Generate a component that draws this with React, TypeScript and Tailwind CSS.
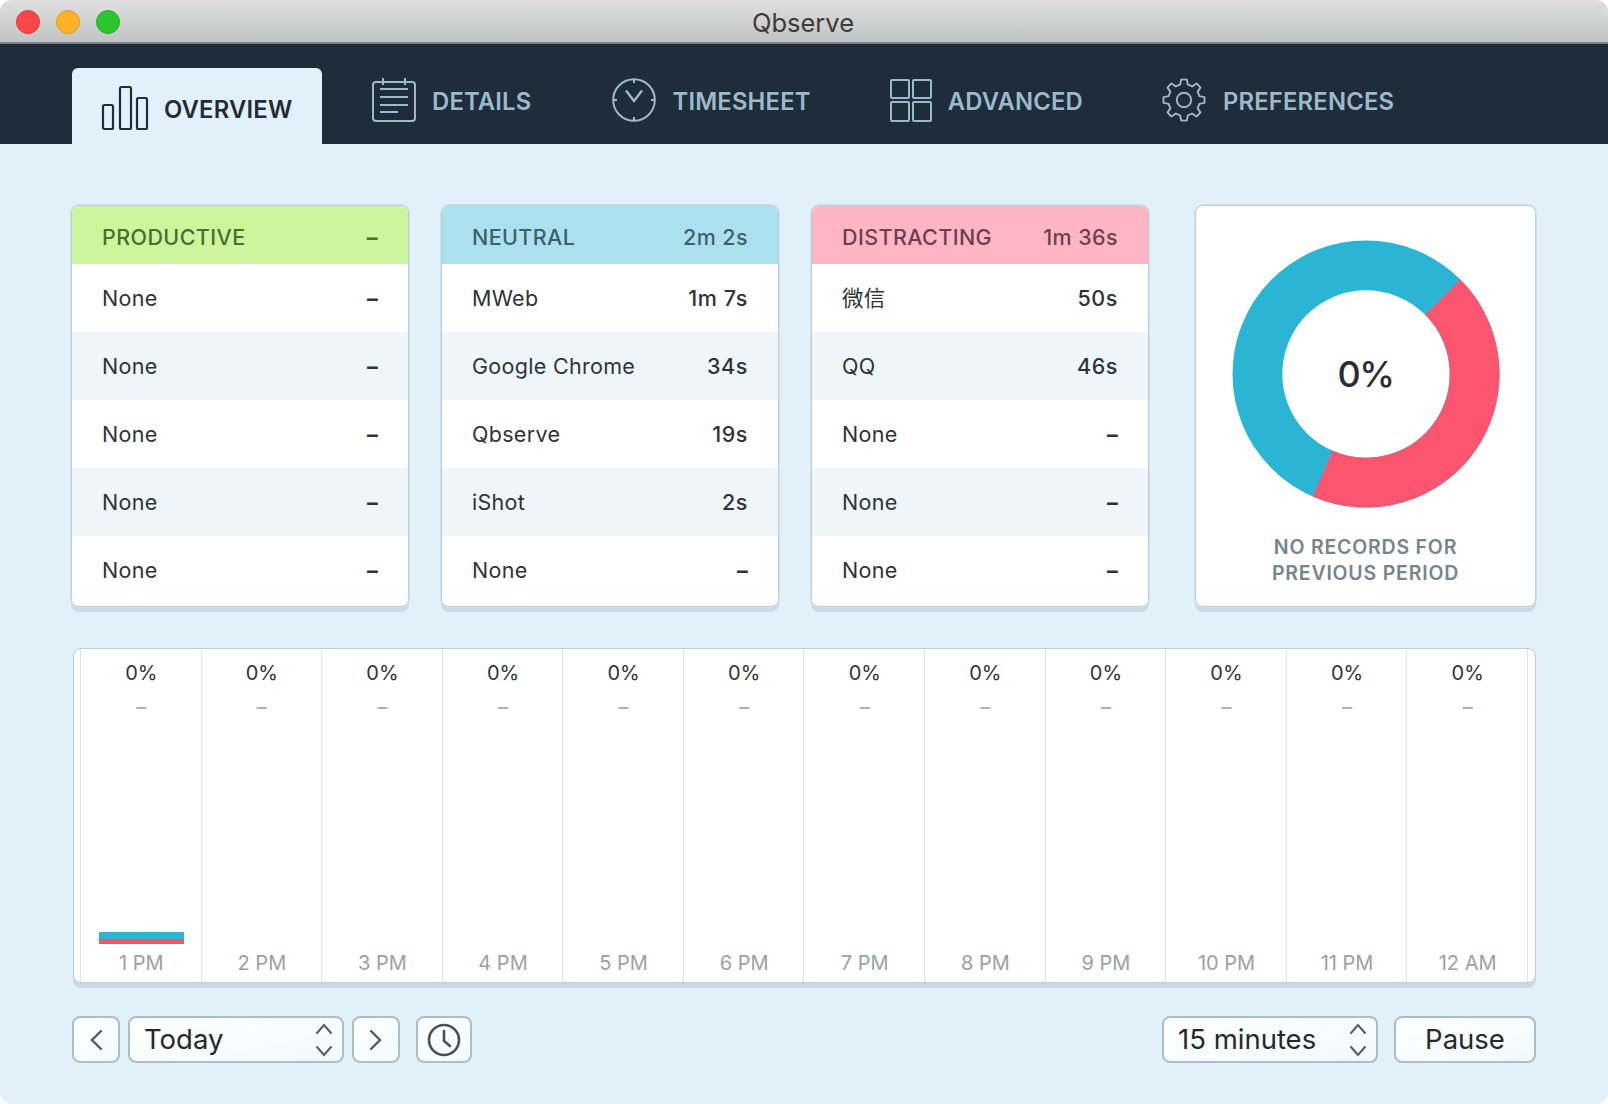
import React from "react";

const gearPath = (() => {
  const pts: string[] = [];
  const p = (deg: number, r: number) => {
    const a = (deg * Math.PI) / 180;
    return `${(24 + Math.sin(a) * r).toFixed(2)} ${(24 - Math.cos(a) * r).toFixed(2)}`;
  };
  for (let i = 0; i < 8; i++) {
    const a = i * 45;
    pts.push(`${i === 0 ? "M" : "L"}${p(a - 14, 16.5)}`);
    pts.push(`L${p(a - 8, 21.5)}`);
    pts.push(`A21.5 21.5 0 0 1 ${p(a + 8, 21.5)}`);
    pts.push(`L${p(a + 14, 16.5)}`);
    pts.push(`A16.5 16.5 0 0 1 ${p(a + 31, 16.5)}`);
  }
  return pts.join(" ") + " Z";
})();

const Stroke = "#9bbaca";

function OverviewIcon() {
  return (
    <svg width="48" height="46" viewBox="0 0 48 46" fill="none" stroke="#1f2c3a" strokeWidth="2.2">
      <rect x="2" y="20" width="10" height="24" rx="1.5" />
      <rect x="19" y="2" width="11" height="42" rx="1.5" />
      <rect x="36" y="13" width="10" height="31" rx="1.5" />
    </svg>
  );
}
function DetailsIcon() {
  return (
    <svg width="44" height="44" viewBox="0 0 44 44" fill="none" stroke={Stroke} strokeWidth="2">
      <rect x="1" y="4" width="42" height="39" rx="3" />
      <path d="M11 0v7M33 0v7M8 11h28M8 19h28M8 27h28M8 34h18" />
    </svg>
  );
}
function ClockIcon() {
  return (
    <svg width="44" height="44" viewBox="0 0 44 44" fill="none" stroke={Stroke} strokeWidth="2">
      <circle cx="22" cy="22" r="20.8" />
      <path d="M22 1v4M22 39v4M1 22h4M39 22h4" />
      <path d="M14 12.5 22 23l8-10.5" strokeWidth="2.4" />
    </svg>
  );
}
function GridIcon() {
  return (
    <svg width="42" height="44" viewBox="0 0 42 44" fill="none" stroke={Stroke} strokeWidth="2">
      <rect x="1" y="2" width="18" height="18" rx="1" />
      <rect x="23" y="2" width="18" height="18" rx="1" />
      <rect x="1" y="24" width="18" height="19" rx="1" />
      <rect x="23" y="24" width="18" height="19" rx="1" />
    </svg>
  );
}
function GearIcon() {
  return (
    <svg width="46" height="46" viewBox="0 0 48 48" fill="none" stroke={Stroke} strokeWidth="2" strokeLinejoin="round">
      <path d={gearPath} />
      <circle cx="24" cy="24" r="7.5" />
    </svg>
  );
}

function Updown() {
  return (
    <svg width="18" height="34" viewBox="0 0 18 34" fill="none" stroke="#555c60" strokeWidth="2" strokeLinecap="round">
      <path d="M2 10 9 2l7 8M2 24l7 8 7-8" />
    </svg>
  );
}

type Row = [string, string];
const cards: { title: string; total: string; head: string; color: string; rows: Row[] }[] = [
  {
    title: "PRODUCTIVE",
    total: "–",
    head: "bg-[#cdf59b]",
    color: "text-[#4b6d2f]",
    rows: [["None", "–"], ["None", "–"], ["None", "–"], ["None", "–"], ["None", "–"]],
  },
  {
    title: "NEUTRAL",
    total: "2m 2s",
    head: "bg-[#abe1ef]",
    color: "text-[#3f5f6c]",
    rows: [["MWeb", "1m 7s"], ["Google Chrome", "34s"], ["Qbserve", "19s"], ["iShot", "2s"], ["None", "–"]],
  },
  {
    title: "DISTRACTING",
    total: "1m 36s",
    head: "bg-[#ffb6c4]",
    color: "text-[#6f3f4b]",
    rows: [["微信", "50s"], ["QQ", "46s"], ["None", "–"], ["None", "–"], ["None", "–"]],
  },
];

const hours = ["1 PM", "2 PM", "3 PM", "4 PM", "5 PM", "6 PM", "7 PM", "8 PM", "9 PM", "10 PM", "11 PM", "12 AM"];

const font = "font-['Inter','Noto_Sans_CJK_SC',sans-serif]";

function Card({ c }: { c: (typeof cards)[number] }) {
  return (
    <div className="w-[338px] h-[402px] rounded-[8px] overflow-hidden bg-white border border-[#bccfdc] shadow-[0_0_0_1px_#d3e1eb,0_5px_0_#cbdae5] flex flex-col">
      <div className={`h-[58px] shrink-0 pt-[5px] flex items-center justify-between px-[30px] text-[21.5px] tracking-[0.4px] font-medium ${c.head} ${c.color}`}>
        <span>{c.title}</span>
        <span className={c.total === "–" ? "font-bold" : ""}>{c.total}</span>
      </div>
      {c.rows.map((r, i) => (
        <div
          key={i}
          className="h-[68px] shrink-0 flex items-center justify-between px-[30px] text-[21.5px] tracking-[0.3px] text-[#2f3336] odd:bg-[#eef6fa] even:bg-white"
        >
          <span>{r[0]}</span>
          <span className={r[1] === "–" ? "font-bold" : "font-medium tracking-[0.6px]"}>{r[1]}</span>
        </div>
      ))}
    </div>
  );
}

const btn =
  "h-[47px] rounded-[8px] border-2 border-[#adbcc6] bg-gradient-to-br from-white to-[#f1f9fd] flex items-center text-[#26292b]";

export default function App() {
  return (
    <div className={`w-[1608px] h-[1104px] bg-white ${font}`}>
      <div className="w-full h-full rounded-[12px] overflow-hidden bg-[#e2f1f9] flex flex-col">
        <div className="relative h-[44px] shrink-0 pt-[5px] pr-[2px] bg-gradient-to-b from-[#e0e0e0] to-[#c2c3c3] border-b-2 border-[#7d8489] flex items-center justify-center text-[25.5px] text-[#3b3b3b]">
          <div className="absolute left-[16px] top-[10px] flex gap-[16px]">
            <span className="w-[24px] h-[24px] rounded-full bg-[#fc4646] border border-[#df3a3a]" />
            <span className="w-[24px] h-[24px] rounded-full bg-[#fdb124] border border-[#e19d1c]" />
            <span className="w-[24px] h-[24px] rounded-full bg-[#2ac52f] border border-[#24ad29]" />
          </div>
          Qbserve
        </div>

        <div className="h-[100px] shrink-0 bg-[#1f2c3a] flex items-end pl-[72px] text-[23.8px] font-semibold text-[#9bbaca] tracking-[0.2px]">
          <div className="w-[250px] h-[76px] rounded-t-[6px] bg-[#e2f1f9] flex items-start pt-[17px] pl-[29px] gap-[15px] text-[#1f2c3a]">
            <OverviewIcon />
            <span className="mt-[7px]">OVERVIEW</span>
          </div>
          <div className="flex items-center gap-[16px] mb-[22px] ml-[50px]">
            <DetailsIcon />
            <span className="mt-[4px]">DETAILS</span>
          </div>
          <div className="flex items-center gap-[16px] mb-[22px] ml-[81px]">
            <ClockIcon />
            <span className="mt-[4px]">TIMESHEET</span>
          </div>
          <div className="flex items-center gap-[16px] mb-[22px] ml-[79px]">
            <GridIcon />
            <span className="mt-[4px]">ADVANCED</span>
          </div>
          <div className="flex items-center gap-[16px] mb-[21px] ml-[78px]">
            <GearIcon />
            <span className="mt-[4px]">PREFERENCES</span>
          </div>
        </div>

        <div className="flex-1 pl-[71px] pr-[72px] pt-[61px] flex flex-col">
          <div className="flex">
            <div className="flex gap-[32px]">
              {cards.map((c) => (
                <Card key={c.title} c={c} />
              ))}
            </div>
            <div className="relative ml-[46px] w-[342px] h-[402px] rounded-[8px] bg-white border border-[#bccfdc] shadow-[0_0_0_1px_#d3e1eb,0_5px_0_#cbdae5] flex flex-col items-center pt-[34px]">
              <svg width="268" height="268" viewBox="-134 -134 268 268" fill="none" strokeWidth="49.8">
                <circle r="108.6" stroke="#29b5d3" />
                <path d="M76.8 -76.8A108.6 108.6 0 0 1 -43.3 99.6" stroke="#fd5570" />
              </svg>
              <div className="absolute top-[144px] left-0 right-0 text-center text-[36px] leading-[48px] tracking-[-1.5px] font-medium text-[#2b2e30]">0%</div>
              <div className="mt-[26px] text-center text-[19.5px] leading-[26px] font-semibold text-[#76858c] tracking-[0.8px]">
                NO RECORDS FOR
                <br />
                PREVIOUS PERIOD
              </div>
            </div>
          </div>

          <div className="mt-[41px] ml-[2px] w-[1463px] h-[335px] rounded-[8px] bg-white border border-[#bccfdc] shadow-[0_5px_0_#cbdae5] pl-[6px] pr-[7px] flex">
            {hours.map((h, i) => (
              <div key={h} className="flex-1 pl-[1px] border-l border-[#dfe2e4] last:border-r flex flex-col items-center text-[20px]">
                <div className="mt-[12px] leading-[24px] text-[#303437]">0%</div>
                <div className="mt-[10px] leading-[24px] text-[#a3a9ac]">–</div>
                <div className="mt-auto w-full px-[17px]">
                  {i === 0 && (
                    <div className="h-[12px] bg-gradient-to-b from-[#29b5d3] from-55% to-[#f1566f] to-60%" />
                  )}
                </div>
                <div className="mt-[7px] mb-[7px] leading-[24px] text-[#9aa1a4]">{h}</div>
              </div>
            ))}
          </div>

          <div className="mt-[33px] ml-[1px] flex items-center text-[27.5px]">
            <div className={`${btn} w-[48px] justify-center`}>
              <svg width="14" height="22" viewBox="0 0 14 22" fill="none" stroke="#555c60" strokeWidth="2.4" strokeLinecap="round">
                <path d="M12 2 3 11l9 9" />
              </svg>
            </div>
            <div className={`${btn} w-[216px] ml-[8px] pl-[14px] pr-[9px] pt-[1px] justify-between`}>
              <span>Today</span>
              <Updown />
            </div>
            <div className={`${btn} w-[48px] ml-[8px] justify-center`}>
              <svg width="14" height="22" viewBox="0 0 14 22" fill="none" stroke="#555c60" strokeWidth="2.4" strokeLinecap="round">
                <path d="M2 2l9 9-9 9" />
              </svg>
            </div>
            <div className={`${btn} w-[56px] ml-[16px] justify-center`}>
              <svg width="34" height="34" viewBox="0 0 34 34" fill="none" stroke="#4a4f52" strokeWidth="2.6" strokeLinecap="round">
                <circle cx="17" cy="17" r="15" />
                <path d="M17 8v10l6 5" />
              </svg>
            </div>
            <div className={`${btn} w-[216px] ml-auto pl-[14px] pr-[9px] pt-[1px] justify-between`}>
              <span>15 minutes</span>
              <Updown />
            </div>
            <div className={`${btn} w-[142px] ml-[16px] pt-[1px] justify-center`}>Pause</div>
          </div>
        </div>
      </div>
    </div>
  );
}
